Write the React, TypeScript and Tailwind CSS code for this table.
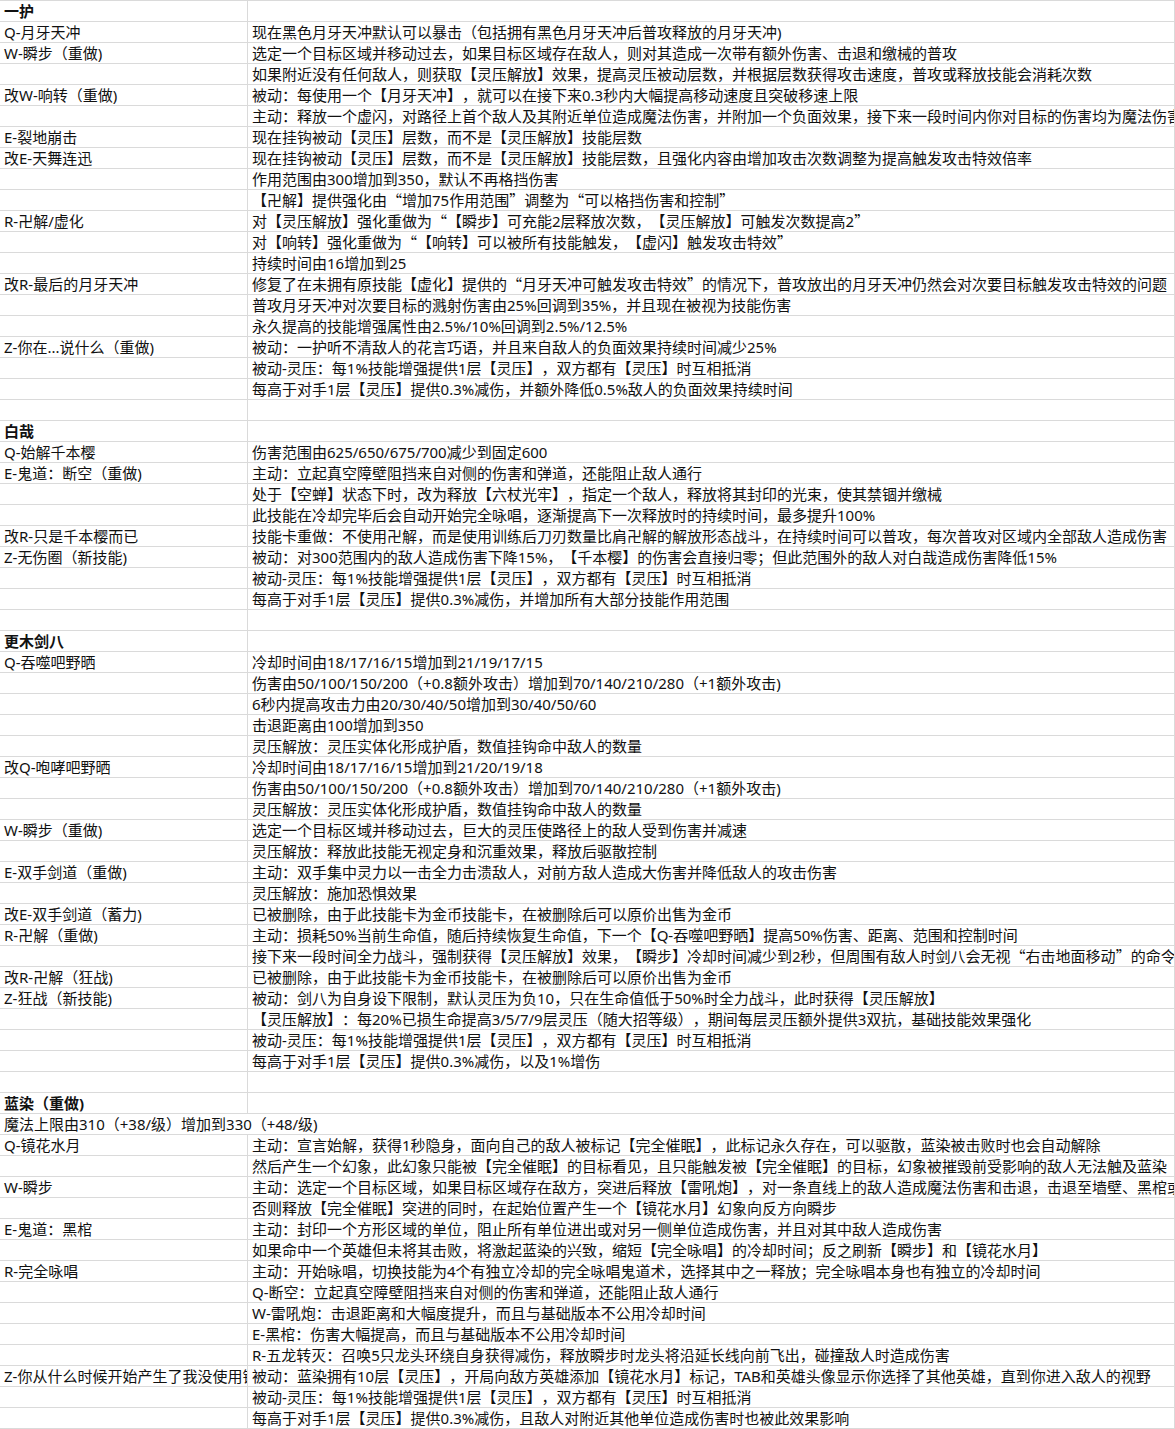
import React from "react";

type Row = { a?: string; b?: string; bold?: boolean; span?: boolean };

const rows: Row[] = [
  { a: "一护", bold: true },
  { a: "Q-月牙天冲", b: "现在黑色月牙天冲默认可以暴击（包括拥有黑色月牙天冲后普攻释放的月牙天冲)" },
  { a: "W-瞬步（重做)", b: "选定一个目标区域并移动过去，如果目标区域存在敌人，则对其造成一次带有额外伤害、击退和缴械的普攻" },
  { b: "如果附近没有任何敌人，则获取【灵压解放】效果，提高灵压被动层数，并根据层数获得攻击速度，普攻或释放技能会消耗次数" },
  { a: "改W-响转（重做)", b: "被动：每使用一个【月牙天冲】，就可以在接下来0.3秒内大幅提高移动速度且突破移速上限" },
  { b: "主动：释放一个虚闪，对路径上首个敌人及其附近单位造成魔法伤害，并附加一个负面效果，接下来一段时间内你对目标的伤害均为魔法伤害" },
  { a: "E-裂地崩击", b: "现在挂钩被动【灵压】层数，而不是【灵压解放】技能层数" },
  { a: "改E-天舞连迅", b: "现在挂钩被动【灵压】层数，而不是【灵压解放】技能层数，且强化内容由增加攻击次数调整为提高触发攻击特效倍率" },
  { b: "作用范围由300增加到350，默认不再格挡伤害" },
  { b: "【卍解】提供强化由“增加75作用范围”调整为“可以格挡伤害和控制”" },
  { a: "R-卍解/虚化", b: "对【灵压解放】强化重做为“【瞬步】可充能2层释放次数，【灵压解放】可触发次数提高2”" },
  { b: "对【响转】强化重做为“【响转】可以被所有技能触发，【虚闪】触发攻击特效”" },
  { b: "持续时间由16增加到25" },
  { a: "改R-最后的月牙天冲", b: "修复了在未拥有原技能【虚化】提供的“月牙天冲可触发攻击特效”的情况下，普攻放出的月牙天冲仍然会对次要目标触发攻击特效的问题" },
  { b: "普攻月牙天冲对次要目标的溅射伤害由25%回调到35%，并且现在被视为技能伤害" },
  { b: "永久提高的技能增强属性由2.5%/10%回调到2.5%/12.5%" },
  { a: "Z-你在...说什么（重做)", b: "被动：一护听不清敌人的花言巧语，并且来自敌人的负面效果持续时间减少25%" },
  { b: "被动-灵压：每1%技能增强提供1层【灵压】，双方都有【灵压】时互相抵消" },
  { b: "每高于对手1层【灵压】提供0.3%减伤，并额外降低0.5%敌人的负面效果持续时间" },
  {},
  { a: "白哉", bold: true },
  { a: "Q-始解千本樱", b: "伤害范围由625/650/675/700减少到固定600" },
  { a: "E-鬼道：断空（重做)", b: "主动：立起真空障壁阻挡来自对侧的伤害和弹道，还能阻止敌人通行" },
  { b: "处于【空蝉】状态下时，改为释放【六杖光牢】，指定一个敌人，释放将其封印的光束，使其禁锢并缴械" },
  { b: "此技能在冷却完毕后会自动开始完全咏唱，逐渐提高下一次释放时的持续时间，最多提升100%" },
  { a: "改R-只是千本樱而已", b: "技能卡重做：不使用卍解，而是使用训练后刀刃数量比肩卍解的解放形态战斗，在持续时间可以普攻，每次普攻对区域内全部敌人造成伤害" },
  { a: "Z-无伤圈（新技能)", b: "被动：对300范围内的敌人造成伤害下降15%，【千本樱】的伤害会直接归零；但此范围外的敌人对白哉造成伤害降低15%" },
  { b: "被动-灵压：每1%技能增强提供1层【灵压】，双方都有【灵压】时互相抵消" },
  { b: "每高于对手1层【灵压】提供0.3%减伤，并增加所有大部分技能作用范围" },
  {},
  { a: "更木剑八", bold: true },
  { a: "Q-吞噬吧野晒", b: "冷却时间由18/17/16/15增加到21/19/17/15" },
  { b: "伤害由50/100/150/200（+0.8额外攻击）增加到70/140/210/280（+1额外攻击)" },
  { b: "6秒内提高攻击力由20/30/40/50增加到30/40/50/60" },
  { b: "击退距离由100增加到350" },
  { b: "灵压解放：灵压实体化形成护盾，数值挂钩命中敌人的数量" },
  { a: "改Q-咆哮吧野晒", b: "冷却时间由18/17/16/15增加到21/20/19/18" },
  { b: "伤害由50/100/150/200（+0.8额外攻击）增加到70/140/210/280（+1额外攻击)" },
  { b: "灵压解放：灵压实体化形成护盾，数值挂钩命中敌人的数量" },
  { a: "W-瞬步（重做)", b: "选定一个目标区域并移动过去，巨大的灵压使路径上的敌人受到伤害并减速" },
  { b: "灵压解放：释放此技能无视定身和沉重效果，释放后驱散控制" },
  { a: "E-双手剑道（重做)", b: "主动：双手集中灵力以一击全力击溃敌人，对前方敌人造成大伤害并降低敌人的攻击伤害" },
  { b: "灵压解放：施加恐惧效果" },
  { a: "改E-双手剑道（蓄力)", b: "已被删除，由于此技能卡为金币技能卡，在被删除后可以原价出售为金币" },
  { a: "R-卍解（重做)", b: "主动：损耗50%当前生命值，随后持续恢复生命值，下一个【Q-吞噬吧野晒】提高50%伤害、距离、范围和控制时间" },
  { b: "接下来一段时间全力战斗，强制获得【灵压解放】效果，【瞬步】冷却时间减少到2秒，但周围有敌人时剑八会无视“右击地面移动”的命令" },
  { a: "改R-卍解（狂战)", b: "已被删除，由于此技能卡为金币技能卡，在被删除后可以原价出售为金币" },
  { a: "Z-狂战（新技能)", b: "被动：剑八为自身设下限制，默认灵压为负10，只在生命值低于50%时全力战斗，此时获得【灵压解放】" },
  { b: "【灵压解放】：每20%已损生命提高3/5/7/9层灵压（随大招等级），期间每层灵压额外提供3双抗，基础技能效果强化" },
  { b: "被动-灵压：每1%技能增强提供1层【灵压】，双方都有【灵压】时互相抵消" },
  { b: "每高于对手1层【灵压】提供0.3%减伤，以及1%增伤" },
  {},
  { a: "蓝染（重做)", bold: true },
  { a: "魔法上限由310（+38/级）增加到330（+48/级)", span: true },
  { a: "Q-镜花水月", b: "主动：宣言始解，获得1秒隐身，面向自己的敌人被标记【完全催眠】，此标记永久存在，可以驱散，蓝染被击败时也会自动解除" },
  { b: "然后产生一个幻象，此幻象只能被【完全催眠】的目标看见，且只能触发被【完全催眠】的目标，幻象被摧毁前受影响的敌人无法触及蓝染" },
  { a: "W-瞬步", b: "主动：选定一个目标区域，如果目标区域存在敌方，突进后释放【雷吼炮】，对一条直线上的敌人造成魔法伤害和击退，击退至墙壁、黑棺或其他单位时造成额外伤害" },
  { b: "否则释放【完全催眠】突进的同时，在起始位置产生一个【镜花水月】幻象向反方向瞬步" },
  { a: "E-鬼道：黑棺", b: "主动：封印一个方形区域的单位，阻止所有单位进出或对另一侧单位造成伤害，并且对其中敌人造成伤害" },
  { b: "如果命中一个英雄但未将其击败，将激起蓝染的兴致，缩短【完全咏唱】的冷却时间；反之刷新【瞬步】和【镜花水月】" },
  { a: "R-完全咏唱", b: "主动：开始咏唱，切换技能为4个有独立冷却的完全咏唱鬼道术，选择其中之一释放；完全咏唱本身也有独立的冷却时间" },
  { b: "Q-断空：立起真空障壁阻挡来自对侧的伤害和弹道，还能阻止敌人通行" },
  { b: "W-雷吼炮：击退距离和大幅度提升，而且与基础版本不公用冷却时间" },
  { b: "E-黑棺：伤害大幅提高，而且与基础版本不公用冷却时间" },
  { b: "R-五龙转灭：召唤5只龙头环绕自身获得减伤，释放瞬步时龙头将沿延长线向前飞出，碰撞敌人时造成伤害" },
  { a: "Z-你从什么时候开始产生了我没使用镜花水月的错觉", b: "被动：蓝染拥有10层【灵压】，开局向敌方英雄添加【镜花水月】标记，TAB和英雄头像显示你选择了其他英雄，直到你进入敌人的视野" },
  { b: "被动-灵压：每1%技能增强提供1层【灵压】，双方都有【灵压】时互相抵消" },
  { b: "每高于对手1层【灵压】提供0.3%减伤，且敌人对附近其他单位造成伤害时也被此效果影响" },
];

// curly quotes need the CJK face so they come out full width
function Text({ s }: { s?: string }) {
  if (!s) return null;
  return (
    <>
      {s.split(/([“”])/).map((part, i) =>
        part === "“" || part === "”" ? (
          <span key={i} className="font-['Noto_Sans_CJK_SC']">
            {part}
          </span>
        ) : (
          <React.Fragment key={i}>{part}</React.Fragment>
        )
      )}
    </>
  );
}

const cell =
  "border-r border-[#dadada] px-[4px] whitespace-nowrap overflow-hidden";

export default function App() {
  return (
    <div className="w-[1175px] bg-white text-[15px] leading-[20px] text-[#111] border-t border-[#dadada] font-['Noto_Sans','Noto_Sans_CJK_SC',sans-serif] [text-spacing-trim:space-all]">
      {rows.map((row, i) =>
        row.span ? (
          <div key={i} className="flex h-[21px] border-b border-[#dadada]">
            <div className={`w-[1175px] ${cell}`}>
              <Text s={row.a} />
            </div>
          </div>
        ) : (
          <div key={i} className="flex h-[21px] border-b border-[#dadada]">
            <div
              className={`w-[248px] shrink-0 ${cell} ${
                row.bold ? "font-bold" : ""
              }`}
            >
              <Text s={row.a} />
            </div>
            <div className={`w-[927px] shrink-0 ${cell}`}>
              <Text s={row.b} />
            </div>
          </div>
        )
      )}
    </div>
  );
}
